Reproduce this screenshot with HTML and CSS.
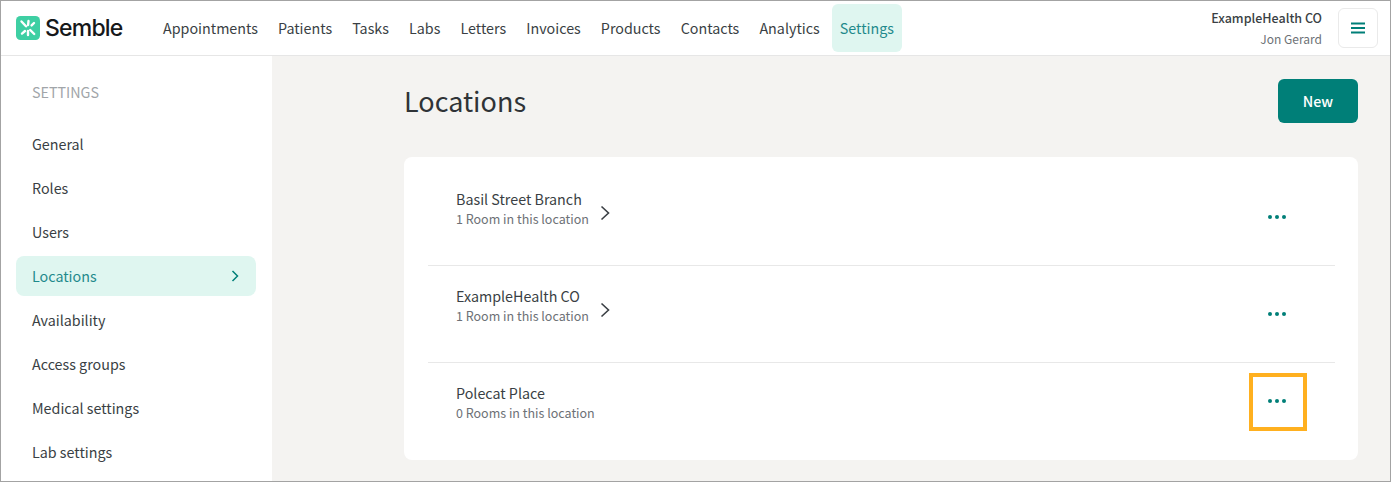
FILE: index.html
```html
<!DOCTYPE html>
<html lang="en">
<head>
  <meta charset="UTF-8" />
  <title>Semble - Locations</title>
  <link rel="stylesheet" href="styles.css">
</head>
<body>
  <div class="app-container">
    <!-- Top Bar -->
    <div class="top-bar">
      <a class="logo" href="#">
        <svg class="logo-mark" viewBox="0 0 24 24" width="24" height="24">
          <rect width="24" height="24" rx="4.5" fill="#3ecfa3"/>
          <g stroke="#fff" stroke-width="2.4" stroke-linecap="round">
            <path d="M12.5 5l-.4 4M12 15v4M5.5 5.5l4.5 4.8M14.2 14l4 4M18 7l-2.4 2.4M6 17.6l3-2.6"/>
          </g>
        </svg>
        <span class="logo-text">Semble</span>
      </a>
      <nav class="main-nav">
        <a href="#">Appointments</a>
        <a href="#">Patients</a>
        <a href="#">Tasks</a>
        <a href="#">Labs</a>
        <a href="#">Letters</a>
        <a href="#">Invoices</a>
        <a href="#">Products</a>
        <a href="#">Contacts</a>
        <a href="#">Analytics</a>
        <a href="#" class="active">Settings</a>
      </nav>
      <div class="account">
        <div class="account-name">ExampleHealth CO</div>
        <div class="account-user">Jon Gerard</div>
      </div>
      <button class="menu-button" aria-label="Menu">
        <svg viewBox="0 0 14 12" width="14" height="12">
          <path d="M0 1.5h14M0 6h14M0 10.5h14" stroke="#007f78" stroke-width="2"/>
        </svg>
      </button>
    </div>

    <div class="page">
      <!-- Sidebar -->
      <aside class="sidebar">
        <div class="sidebar-title">SETTINGS</div>
        <a href="#">General</a>
        <a href="#">Roles</a>
        <a href="#">Users</a>
        <a href="#" class="active">Locations
          <svg viewBox="0 0 8 12" width="8" height="12">
            <path d="M1.5 1l5 5-5 5" fill="none" stroke="#007f78" stroke-width="1.5"/>
          </svg>
        </a>
        <a href="#">Availability</a>
        <a href="#">Access groups</a>
        <a href="#">Medical settings</a>
        <a href="#">Lab settings</a>
      </aside>

      <!-- Main -->
      <main class="content">
        <div class="content-head">
          <h1>Locations</h1>
          <button class="new-button">New</button>
        </div>
        <div class="card">
          <div class="location">
            <a class="location-link" href="#">
              <span class="location-text">
                <span class="location-name">Basil Street Branch</span>
                <span class="location-rooms">1 Room in this location</span>
              </span>
              <svg viewBox="0 0 10 16" width="10" height="16">
                <path d="M1.5 1.5l7 6.5-7 6.5" fill="none" stroke="#3a3f44" stroke-width="1.6"/>
              </svg>
            </a>
            <button class="dots" aria-label="More"><i></i><i></i><i></i></button>
          </div>
          <div class="location">
            <a class="location-link" href="#">
              <span class="location-text">
                <span class="location-name">ExampleHealth CO</span>
                <span class="location-rooms">1 Room in this location</span>
              </span>
              <svg viewBox="0 0 10 16" width="10" height="16">
                <path d="M1.5 1.5l7 6.5-7 6.5" fill="none" stroke="#3a3f44" stroke-width="1.6"/>
              </svg>
            </a>
            <button class="dots" aria-label="More"><i></i><i></i><i></i></button>
          </div>
          <div class="location last">
            <a class="location-link" href="#">
              <span class="location-text">
                <span class="location-name">Polecat Place</span>
                <span class="location-rooms">0 Rooms in this location</span>
              </span>
            </a>
            <button class="dots highlighted" aria-label="More"><i></i><i></i><i></i></button>
          </div>
        </div>
      </main>
    </div>
  </div>
</body>
</html>
```

FILE: styles.css
```css
/* Global Styles */
html, body {
  margin: 0;
  padding: 0;
  height: 100%;
  overflow: hidden;
  font-family: 'Noto Sans CJK JP', 'Open Sans', sans-serif;
  font-size: 14.3px;
  color: #3a3f44;
}
a {
  color: inherit;
  text-decoration: none;
}
button {
  font-family: inherit;
  cursor: pointer;
}
.app-container {
  box-sizing: border-box;
  height: 482px;
  border: 1px solid #a3a3a3;
  background: #f4f3f1;
  display: flex;
  flex-direction: column;
  overflow: hidden;
}
/* Top Bar */
.top-bar {
  box-sizing: border-box;
  flex: none;
  height: 55px;
  background: #fff;
  border-bottom: 1px solid #e6e6e6;
  display: flex;
  align-items: center;
  padding: 0 12px 0 15px;
}
.logo {
  display: flex;
  align-items: center;
  gap: 5px;
  width: 139px;
}
.logo-text {
  font-family: 'Inter', sans-serif;
  font-size: 23px;
  font-weight: 500;
  letter-spacing: -0.8px;
  line-height: 24px;
  color: #16181a;
}
.main-nav {
  display: flex;
  gap: 4.1px;
  flex: 1;
  height: 48px;
}
.main-nav a {
  padding: 0 8px;
  line-height: 48px;
  border-radius: 6px;
}
.main-nav a.active {
  background: #dff6f0;
  color: #1f8a8c;
}
.account {
  text-align: right;
  margin-right: 16px;
}
.account-name {
  font-size: 12.5px;
  font-weight: 500;
  line-height: 18px;
}
.account-user {
  font-size: 12px;
  line-height: 18px;
  margin-top: 3px;
  color: #6d7176;
}
.menu-button {
  width: 40px;
  height: 40px;
  padding: 0;
  background: #fff;
  border: 1px solid #eaeaea;
  border-radius: 6px;
  display: flex;
  align-items: center;
  justify-content: center;
}
/* Layout */
.page {
  flex: 1;
  display: flex;
  min-height: 0;
}
/* Sidebar */
.sidebar {
  flex: none;
  width: 271px;
  background: #fff;
  box-sizing: border-box;
  padding: 24px 16px 0 15px;
}
.sidebar-title {
  line-height: 24px;
  padding-left: 16px;
  margin-bottom: 20px;
  color: #a1a5a9;
}
.sidebar a {
  height: 40px;
  margin-bottom: 4px;
  padding: 0 16px;
  line-height: 40px;
  border-radius: 8px;
  display: flex;
  align-items: center;
  justify-content: space-between;
}
.sidebar a.active {
  padding-right: 17px;
  background: #dff6f0;
  color: #1f8a8c;
}
/* Main */
.content {
  flex: 1;
  min-width: 0;
  padding: 23px 32px 0 132px;
}
.content-head {
  display: flex;
  align-items: center;
  justify-content: space-between;
  height: 44px;
  margin-bottom: 34px;
}
.content-head h1 {
  margin: 0;
  font-size: 27px;
  font-weight: 400;
  line-height: 44px;
  color: #2f3337;
}
.new-button {
  width: 80px;
  height: 44px;
  padding: 0 0 2px;
  background: #007f78;
  color: #fff;
  border: none;
  border-radius: 6px;
  font-size: 14.3px;
  font-weight: 500;
}
.card {
  background: #fff;
  border-radius: 8px;
  padding: 12px 23px 0 24px;
  height: 303px;
  box-sizing: border-box;
}
.location {
  box-sizing: border-box;
  height: 97px;
  padding: 0 28px;
  border-bottom: 1px solid #e8e8e8;
  display: flex;
  align-items: center;
  justify-content: space-between;
}
.location.last {
  height: 76px;
  border-bottom: none;
}
.location-link {
  align-self: flex-start;
  margin-top: 20px;
  display: flex;
  align-items: center;
  gap: 11px;
}
.location-link svg {
  margin-top: 8px;
}
.location-text {
  display: flex;
  flex-direction: column;
}
.location-name {
  line-height: 20px;
}
.location-rooms {
  font-size: 12.5px;
  line-height: 19px;
  color: #6d7176;
}
.dots {
  background: none;
  border: none;
  padding: 0;
  width: 18px;
  height: 18px;
  margin-right: 21px;
  display: flex;
  align-items: center;
  justify-content: center;
  gap: 2.7px;
}
.dots i {
  width: 4px;
  height: 4px;
  border-radius: 50%;
  background: #007f78;
}
.dots.highlighted {
  position: relative;
}
.dots.highlighted::after {
  content: '';
  position: absolute;
  left: -19px;
  top: -19px;
  width: 58px;
  height: 58px;
  box-sizing: border-box;
  border: 4px solid #ffb01f;
}
```
